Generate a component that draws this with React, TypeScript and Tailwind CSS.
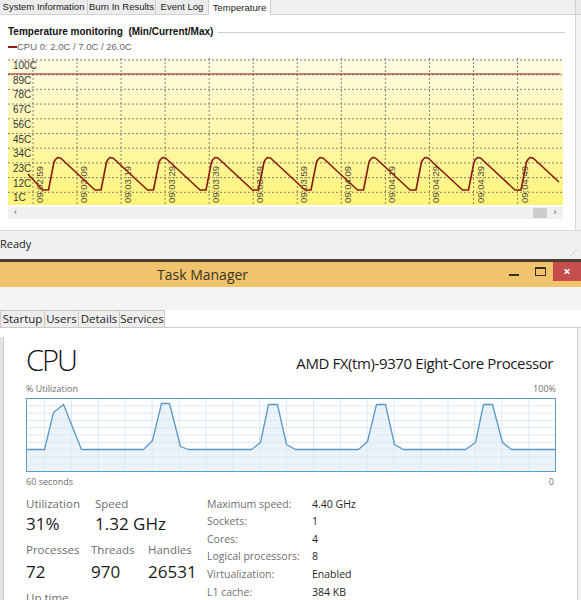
import React from "react";

const temps = ["100C", "89C", "78C", "67C", "56C", "45C", "34C", "23C", "12C", "1C"];
const times = [
  "09:02:59", "09:03:09", "09:03:19", "09:03:29", "09:03:39", "09:03:49",
  "09:03:59", "09:04:09", "09:04:19", "09:04:29", "09:04:39", "09:04:49",
];

// sawtooth temperature trace, page coordinates
const tempTrace = (() => {
  const pts: string[] = ["28,174"];
  for (let k = 0; k < 10; k++) {
    const p = 59 + 52.5 * k;
    pts.push(`${p - 16.5},190`, `${p - 10.5},190`, `${p - 5},162`, `${p - 3.5},159.5`, `${p - 1.5},157.5`, `${p + 1.5},158`);
  }
  pts.push("559,182");
  return pts.join(" ");
})();

const cpuTrace: [number, number][] = [
  [27, 449], [45, 449], [54, 412], [64, 404], [82, 449], [144, 449], [153, 440], [162, 403],
  [170, 403], [181, 446], [189, 449], [252, 449], [261, 442], [269, 404], [278, 404], [287, 444],
  [296, 449], [359, 449], [368, 441], [377, 404], [386, 404], [395, 444], [404, 449], [466, 449],
  [476, 442], [484, 404], [493, 404], [503, 442], [512, 449], [556, 449],
];

function TempChart() {
  return (
    <svg width={555} height={147} className="block">
      <defs>
        <linearGradient id="tempBg" x1="0" y1="0" x2="0" y2="1">
          <stop offset="0" stopColor="#fffbe3" />
          <stop offset="1" stopColor="#fff479" />
        </linearGradient>
      </defs>
      <g transform="translate(-8,-58)">
        <rect x={8} y={58} width={555} height={147} fill="url(#tempBg)" />
        {temps.map((t, i) => {
          const y = 60 + i * 14.7;
          return (
            <g key={t}>
              <line x1={8} x2={563} y1={y} y2={y} stroke="#666" strokeWidth={0.8} strokeDasharray="2 2" />
              <text x={13} y={y + 9} fontSize={10} fill="#333" fontFamily="Liberation Sans, Arial, sans-serif">
                {t}
              </text>
            </g>
          );
        })}
        {times.map((t, i) => {
          const x = 33 + i * 44.05;
          return (
            <g key={t}>
              <line x1={x} x2={x} y1={58} y2={205} stroke="#666" strokeWidth={0.8} strokeDasharray="2 2" />
              <text
                x={x + 10}
                y={203}
                transform={`rotate(-90 ${x + 10} 203)`}
                fontSize={9.5}
                fill="#4a4a3a"
                fontFamily="Liberation Sans, Arial, sans-serif"
              >
                {t}
              </text>
            </g>
          );
        })}
        <line x1={8} x2={560} y1={74} y2={74} stroke="#8f1515" strokeWidth={1.2} />
        <polyline points={tempTrace} fill="none" stroke="#8a1a10" strokeWidth={1.6} strokeLinejoin="round" />
      </g>
    </svg>
  );
}

function CpuGraph() {
  const vx = Array.from({ length: 19 }, (_, i) => 45 + i * 26.9);
  const hy = Array.from({ length: 9 }, (_, i) => 405.3 + i * 7.3);
  const line = cpuTrace.map(([x, y]) => `${x},${y}`).join(" ");
  const fill = `${line} 556,471 27,471`;
  return (
    <svg width={530} height={74} className="block shrink-0">
      <g transform="translate(-26.5,-397.5)">
        {hy.map((y) => (
          <line key={y} x1={27} x2={556} y1={y} y2={y} stroke="#dbe8f3" strokeWidth={1} />
        ))}
        {vx.map((x) => (
          <line key={x} x1={x} x2={x} y1={398} y2={471} stroke="#dbe8f3" strokeWidth={1} />
        ))}
        <polygon points={fill} fill="#dbe9f5" fillOpacity={0.55} />
        <polyline points={line} fill="none" stroke="#5a97c8" strokeWidth={1.3} strokeLinejoin="round" />
        <rect x={27} y={398} width={529} height={73} fill="none" stroke="#5e9ccc" strokeWidth={1} />
      </g>
    </svg>
  );
}

function BurnInWindow() {
  const tabs = [
    { label: "System Information", w: "w-[88px]" },
    { label: "Burn In Results", w: "w-[68px]" },
    { label: "Event Log", w: "w-[53px]" },
  ];
  return (
    <div className="h-[259px] shrink-0 flex flex-col font-['Liberation_Sans',Arial,sans-serif]">
      <div className="h-[15px] shrink-0 flex items-end bg-[#f0f0f0] border-b border-[#d4d4d4]">
        {tabs.map((t) => (
          <div
            key={t.label}
            className={`${t.w} shrink-0 h-[14px] flex items-center justify-center whitespace-nowrap text-[9.5px] text-[#1a1a1a] bg-[#ececec] border-r border-[#cfcfcf] leading-none`}
          >
            {t.label}
          </div>
        ))}
        <div className="w-[62px] shrink-0 h-[15px] -mb-px flex items-center justify-center whitespace-nowrap text-[9.5px] text-[#1a1a1a] bg-white border-r border-[#cfcfcf] leading-none">
          Temperature
        </div>
        <div className="flex-1" />
        <div className="w-[6px] h-full border-l border-[#cfcfcf] bg-[#ebebeb]" />
      </div>

      <div className="h-[215px] shrink-0 flex">
        <div className="flex-1 bg-white flex flex-col pl-[8px]">
          <div className="h-[11px] shrink-0" />
          <div className="flex items-center gap-[5px] h-[12px] shrink-0 pr-[10px]">
            <span className="text-[10px] font-bold text-[#111] whitespace-pre leading-none">
              Temperature monitoring  (Min/Current/Max)
            </span>
            <div className="flex-1 h-px bg-[#cfcfcf]" />
          </div>
          <div className="h-[12px] shrink-0 mt-[3px] flex items-center">
            <div className="w-[9px] h-[2px] bg-[#9b1b1b]" />
            <span className="text-[9.5px] text-[#666] leading-none">CPU 0: 2.0C / 7.0C / 26.0C</span>
          </div>
          <div className="mt-[5px] shrink-0">
            <TempChart />
          </div>
          <div className="mt-[2px] shrink-0 w-[555px] h-[12px] bg-[#f0f0f0] flex items-center text-[9px] text-[#555]">
            <span className="pl-[6px]">&lsaquo;</span>
            <div className="flex-1" />
            <div className="w-[14px] h-[10px] bg-[#cdcdcd]" />
            <span className="w-[16px] text-center">&rsaquo;</span>
          </div>
        </div>
        <div className="w-[6px] border-l border-[#d6d6d6] bg-[#f3f3f3]" />
      </div>

      <div className="flex-1 bg-[#f0f0f0] border-t border-[#dadada] flex items-center justify-between pr-[4px] font-['Open_Sans','Noto_Sans',sans-serif]">
        <span className="text-[11px] text-[#222] leading-none -mt-[3px]">Ready</span>
        <span className="text-[7px] text-[#aaa] self-end leading-none mb-[3px]">⋰</span>
      </div>
    </div>
  );
}

function TaskManager() {
  const tmTabs = [
    { label: "Startup", w: "w-[45px]" },
    { label: "Users", w: "w-[35px]" },
    { label: "Details", w: "w-[42px]" },
    { label: "Services", w: "w-[46px]" },
  ];
  const specs = [
    ["Maximum speed:", "4.40 GHz"],
    ["Sockets:", "1"],
    ["Cores:", "4"],
    ["Logical processors:", "8"],
    ["Virtualization:", "Enabled"],
    ["L1 cache:", "384 KB"],
  ];
  return (
    <div className="flex-1 min-h-0 flex flex-col font-['Open_Sans','Noto_Sans',sans-serif]">
      <div className="h-[3px] shrink-0 bg-[#4b3f33]" />
      <div className="h-[25px] shrink-0 bg-[#efc46c] flex items-start">
        <div className="flex-1 h-full flex items-center pl-[157px]">
          <span className="text-[14px] text-[#3d3320] leading-none">Task Manager</span>
        </div>
        <div className="w-[26px] h-[19px] flex items-center justify-center">
          <div className="w-[10px] h-[2px] bg-[#3a3020] mt-[7px]" />
        </div>
        <div className="w-[26px] h-[19px] flex items-center justify-center">
          <div className="w-[11px] h-[9px] border border-[#3a3020] border-t-2" />
        </div>
        <div className="w-[28px] h-[19px] bg-[#c74c4c] flex items-center justify-center text-white text-[13px] font-bold leading-none">
          ×
        </div>
      </div>
      <div className="h-[23px] shrink-0 bg-[#f3f3f3]" />
      <div className="h-[18px] shrink-0 flex items-end border-b border-[#cfcfcf] bg-white">
        {tmTabs.map((t) => (
          <div
            key={t.label}
            className={`${t.w} h-[18px] -mb-px flex items-center justify-center bg-[#ededed] border border-[#c9c9c9] -ml-px first:ml-0 text-[11.5px] text-[#1f1f1f] leading-none`}
          >
            {t.label}
          </div>
        ))}
      </div>

      <div className="flex-1 min-h-0 flex overflow-hidden">
        <div className="w-[4px] mt-[9px] bg-[#e3e3e3] border-r border-[#cfcfcf]" />
        <div className="flex-1 bg-white pl-[22px] flex flex-col">
          <div className="h-[50px] shrink-0 flex items-end justify-between pb-[4px] pr-[24px]">
            <span className="text-[29px] font-light text-[#111] leading-none tracking-[-2px]">CPU</span>
            <span className="text-[15px] text-[#1a1a1a] leading-none mb-[3px] tracking-[-0.4px]">
              AMD FX(tm)-9370 Eight-Core Processor
            </span>
          </div>
          <div className="h-[20px] shrink-0 flex items-center justify-between text-[9px] text-[#707070] leading-none w-[530px]">
            <span>% Utilization</span>
            <span>100%</span>
          </div>
          <CpuGraph />
          <div className="h-[18px] shrink-0 flex items-center justify-between text-[9px] text-[#707070] leading-none w-[530px] pr-[2px]">
            <span>60 seconds</span>
            <span>0</span>
          </div>
          <div className="flex shrink-0 mt-[6px]">
            <div className="w-[181px] flex flex-col">
              <div className="flex">
                <div className="w-[69px] flex flex-col">
                  <span className="text-[11.5px] text-[#6d6d6d] leading-[16px]">Utilization</span>
                  <span className="text-[17px] text-[#1a1a1a] leading-[24px]">31%</span>
                </div>
                <div className="flex flex-col">
                  <span className="text-[11.5px] text-[#6d6d6d] leading-[16px]">Speed</span>
                  <span className="text-[17px] text-[#1a1a1a] leading-[24px]">1.32 GHz</span>
                </div>
              </div>
              <div className="flex mt-[6px]">
                <div className="w-[65px] flex flex-col">
                  <span className="text-[11.5px] text-[#6d6d6d] leading-[16px]">Processes</span>
                  <span className="text-[17px] text-[#1a1a1a] leading-[24px] mt-[2px]">72</span>
                </div>
                <div className="w-[57px] flex flex-col">
                  <span className="text-[11.5px] text-[#6d6d6d] leading-[16px]">Threads</span>
                  <span className="text-[17px] text-[#1a1a1a] leading-[24px] mt-[2px]">970</span>
                </div>
                <div className="flex flex-col">
                  <span className="text-[11.5px] text-[#6d6d6d] leading-[16px]">Handles</span>
                  <span className="text-[17px] text-[#1a1a1a] leading-[24px] mt-[2px]">26531</span>
                </div>
              </div>
              <span className="text-[11.5px] text-[#6d6d6d] leading-[16px] mt-[6px]">Up time</span>
            </div>
            <div className="flex flex-col -mt-[1px]">
              {specs.map(([k, v]) => (
                <div key={k} className="flex h-[17.6px] items-center leading-none">
                  <span className="w-[105px] text-[10.5px] text-[#707070]">{k}</span>
                  <span className="text-[10.5px] text-[#1f1f1f]">{v}</span>
                </div>
              ))}
            </div>
          </div>
        </div>
        <div className="w-[4px] border-l border-[#cfcfcf] bg-[#f3f3f3]" />
      </div>
    </div>
  );
}

export default function App() {
  return (
    <div className="w-[581px] h-[600px] overflow-hidden bg-white flex flex-col">
      <BurnInWindow />
      <TaskManager />
    </div>
  );
}
